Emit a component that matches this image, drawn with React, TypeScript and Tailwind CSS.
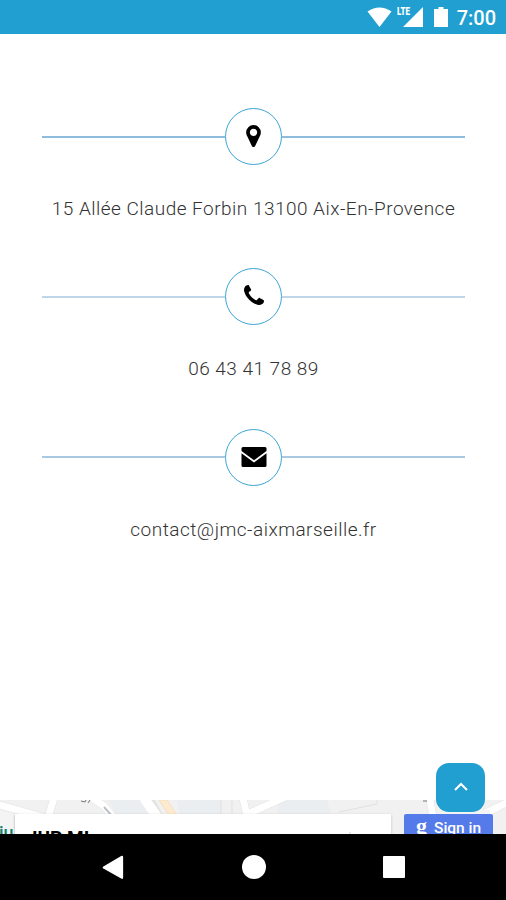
import type { ReactNode } from "react";

interface ContactRowProps {
  icon: ReactNode;
  text: string;
  lineClass: string;
}

function StatusBar() {
  return (
    <header className="flex h-[34px] shrink-0 items-start justify-end bg-[#219fd1] pt-[7px] pr-[10px] text-white">
      <svg className="mr-[5px]" width="25" height="21" viewBox="0 0 24 21" fill="currentColor">
        <path d="M0 4.5Q12-3.5 24 4.5L12 20Z" />
      </svg>
      <div className="relative mr-[11px] h-[21px] w-[26px]">
        <span className="absolute -top-px left-0 origin-left scale-x-[0.8] font-['Roboto',sans-serif] text-[10px] leading-[11px] font-black">
          LTE
        </span>
        <svg width="26" height="21" viewBox="0 0 26 21" fill="currentColor">
          <path d="M26 0V20H6Z" />
        </svg>
      </div>
      <svg className="mr-[9px]" width="14" height="21" viewBox="0 0 14 21" fill="currentColor">
        <path d="M4.5 0h5v2H14v18H0V2h4.5Z" />
      </svg>
      <span className="mt-px font-['Roboto',sans-serif] text-[20px] leading-[20px] font-medium">
        7:00
      </span>
    </header>
  );
}

function ContactRow({ icon, text, lineClass }: ContactRowProps) {
  return (
    <section className="flex h-[160.4px] flex-col items-center">
      <div className="flex w-full items-center">
        <div className={`h-[2px] flex-1 ${lineClass}`} />
        <div className="flex size-[57px] items-center justify-center rounded-full border-[1.5px] border-[#3da5d4] bg-white text-black">
          {icon}
        </div>
        <div className={`h-[2px] flex-1 ${lineClass}`} />
      </div>
      <p className="mt-[31px] font-['Roboto',sans-serif] text-[19px] leading-[26px] font-light tracking-[0.48px] whitespace-nowrap text-[#333]">
        {text}
      </p>
    </section>
  );
}

function PinIcon() {
  return (
    <svg className="-mt-px" width="15" height="22" viewBox="0 128 1024 1536" fill="currentColor">
      <path d="M768 640q0-106-75-181t-181-75-181 75-75 181 75 181 181 75 181-75 75-181zm256 0q0 109-33 179l-364 774q-16 33-47.5 52t-67.5 19-67.5-19-46.5-52l-365-774q-33-70-33-179 0-212 150-362t362-150 362 150 150 362z" />
    </svg>
  );
}

function PhoneIcon() {
  return (
    <svg className="-mt-[3px]" width="20" height="20" viewBox="0 128 1408 1408" fill="currentColor">
      <path d="M1408 1240q0 27-10 70.5t-21 68.5q-21 50-122 106-94 51-186 51-27 0-53-3.5t-57.5-12.5-47-14.5-55.5-20.5-49-18q-98-35-175-83-127-79-264-216t-216-264q-48-77-83-175-3-9-18-49t-20.5-55.5-14.5-47-12.5-57.5-3.5-53q0-92 51-186 56-101 106-122 25-11 68.5-21t70.5-10q14 0 21 3 18 6 53 76 11 19 30 54t35 63.5 31 53.5q3 4 17.5 25t21.5 35.5 7 28.5q0 20-28.5 50t-62 55-62 53-28.5 46q0 9 5 22.5t8.5 20.5 14 24 11.5 19q76 137 174 235t235 174q2 1 19 11.5t24 14 20.5 8.5 22.5 5q18 0 46-28.5t53-62 55-62 50-28.5q14 0 28.5 7t35.5 21.5 25 17.5q25 15 53.5 31t63.5 35 54 30q70 35 76 53 3 7 3 21z" />
    </svg>
  );
}

function EnvelopeIcon() {
  return (
    <svg className="-mt-px" width="26" height="20" viewBox="0 0 26 20" fill="currentColor">
      <path d="M2 0H24Q25.5 0 25.5 1.5V4L13 13.2.5 4V1.5Q.5 0 2 0Z" />
      <path d="M.5 6.3 13 15.4 25.5 6.3V18.5Q25.5 20 24 20H2Q.5 20 .5 18.5Z" />
    </svg>
  );
}

function MapStrip() {
  return (
    <div className="relative h-[34px] shrink-0 overflow-hidden bg-[#f1f1f1] font-['Roboto',sans-serif]">
      <svg className="absolute inset-0" width="506" height="34" viewBox="0 0 506 34" fill="none">
        <path d="M108 0H143L152 16H118ZM177 0H221V16H180ZM280 0H327L331 14H277Z" fill="#ebeef0" />
        <g stroke="#e2e2e2" strokeWidth="8">
          <path d="M-4 4 50 19M54-2 48 18M243-2 247 16M250 13 285-3M430 0 436 34M484 14 512 0" />
          <path d="M149-2 160 18M92-2 104 6 114 18" />
        </g>
        <g stroke="#fff" strokeWidth="7">
          <path d="M-4 4 50 19M54-2 48 18M243-2 247 16M250 13 285-3M430 0 436 34M484 14 512 0" />
          <path d="M92-2 104 6 114 18" />
        </g>
        <path d="M144-2 158 18" stroke="#fff" strokeWidth="10" />
        <path d="M-2 10 15 15V36H-2ZM436 17 444 10H490V16" fill="#f4f4f4" />
        <path d="M15 15V34M221 0V16M232 0V16M339 12 377 4V0" stroke="#e0e1e1" />
        <path d="m159 0 8 0 10 15H169Z" fill="#fdebcf" stroke="#f6dfbd" />
        <path d="m104 7 8 9" stroke="#bcc2c7" strokeWidth="2" />
        <path d="m81 1 4 1 1-2M88 3l2-3M423 1h4" stroke="#777" />
      </svg>
      <span className="absolute top-[23px] -left-px text-[18px] leading-[20px] font-medium text-[#12806f]">
        iu
      </span>
      {/* Place card, cut off by the navigation bar */}
      <div className="absolute top-[14px] left-[15px] h-[40px] w-[376px] bg-white shadow-[0_1px_3px_rgba(0,0,0,0.2)]">
        <p className="mt-[12px] ml-[17px] text-[19px] leading-[24px] font-bold text-black">IUP MI</p>
        <span className="absolute top-[18px] left-[334px] h-[2px] w-[2px] bg-gray-200" />
      </div>
      <div className="absolute top-[14px] left-[404px] flex h-[30px] w-[89px] rounded-[2px] bg-[#557bea] pt-[4px] pl-[12px] text-white">
        <span className="-mt-px font-['Liberation_Serif',serif] text-[22px] leading-[18px] font-bold">g</span>
        <span className="ml-[7px] text-[15.5px] leading-[20px] font-medium whitespace-nowrap">
          Sign in
        </span>
      </div>
    </div>
  );
}

function NavBar() {
  return (
    <nav className="flex h-[66px] shrink-0 items-center justify-between bg-black pr-[101px] pl-[102px] text-white">
      <svg width="22" height="25" viewBox="0 0 22 26" fill="currentColor">
        <path d="M19.5 1Q21.5 0 21.5 2V23.5Q21.5 25.5 19.5 24.5L1 14Q-.5 13 1 12Z" />
      </svg>
      <div className="size-[24px] rounded-full bg-white" />
      <div className="size-[22px] rounded-[1px] bg-white" />
    </nav>
  );
}

export default function App() {
  return (
    <div className="relative flex h-[900px] w-[506px] flex-col overflow-hidden bg-white">
      <StatusBar />
      <main className="flex-1 pt-[74px] pr-[41px] pl-[42px]">
        <ContactRow
          icon={<PinIcon />}
          text="15 Allée Claude Forbin 13100 Aix-En-Provence"
          lineClass="bg-[#8ebcdc]"
        />
        <ContactRow icon={<PhoneIcon />} text="06 43 41 78 89" lineClass="bg-[#bfd5e8]" />
        <ContactRow
          icon={<EnvelopeIcon />}
          text="contact@jmc-aixmarseille.fr"
          lineClass="bg-[#a9c8e2]"
        />
      </main>
      <MapStrip />
      <NavBar />

      {/* Back to top */}
      <button
        type="button"
        aria-label="Back to top"
        className="absolute top-[763px] left-[436px] flex size-[49px] items-center justify-center rounded-[13px] bg-[#219fd1] pb-[2px] text-white"
      >
        <svg width="14" height="9" viewBox="0 0 14 9" fill="none" stroke="currentColor" strokeWidth="2">
          <path d="m1 8 6-6 6 6" />
        </svg>
      </button>
    </div>
  );
}
